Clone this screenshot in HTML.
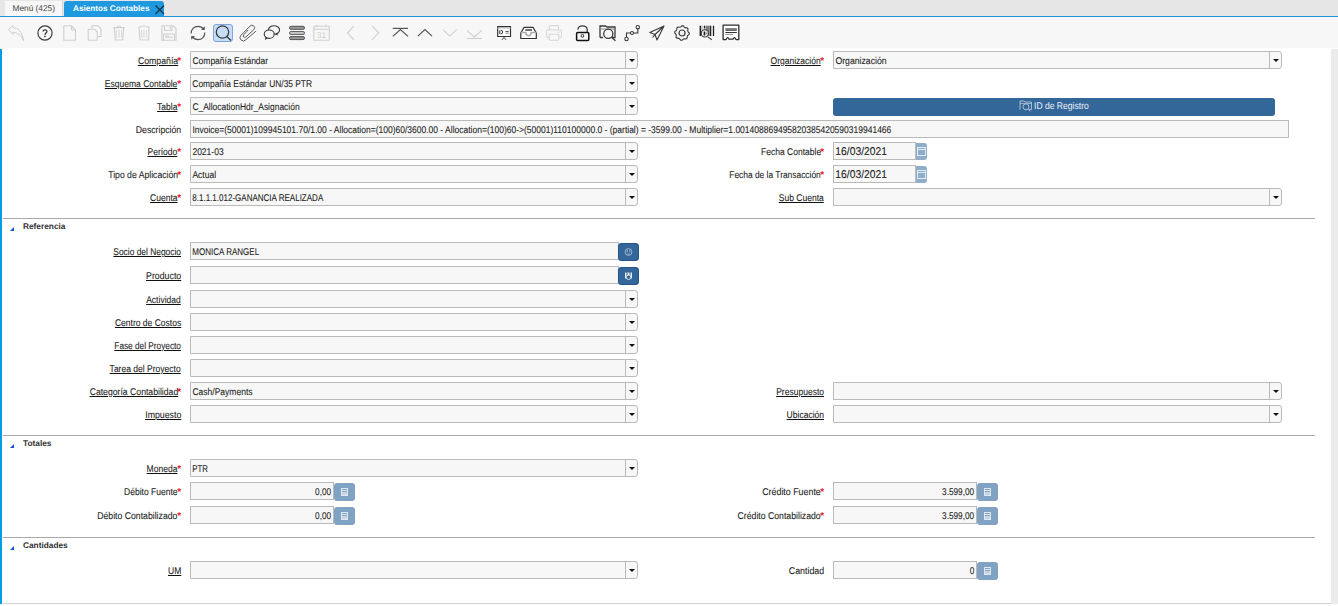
<!DOCTYPE html><html><head><meta charset="utf-8"><title>Asientos Contables</title><style>
*{margin:0;padding:0;box-sizing:border-box}
html,body{width:1338px;height:606px;overflow:hidden;background:#fff;font-family:"Liberation Sans", sans-serif;color:#333;position:relative;text-rendering:geometricPrecision}
.abs{position:absolute}
#tabbar{position:absolute;left:0;top:0;width:1338px;height:16px;background:#e6e6e6}
#tabline{position:absolute;left:0;top:16px;width:1338px;height:1px;background:#1b94da}
#tab1{position:absolute;left:5px;top:1px;width:58px;height:15px;background:#f7f7f7;border-right:1px solid #d4d4d4;font-size:8.3px;color:#444;line-height:15px;padding-left:7.5px;white-space:nowrap}
#tab2{position:absolute;left:64px;top:1px;width:100px;height:15px;background:#1e98de;border-radius:3px 3px 0 0;font-size:8.2px;font-weight:bold;color:#fff;line-height:15px;padding-left:9px;white-space:nowrap;overflow:hidden}
#toolbar{position:absolute;left:0;top:17px;width:1338px;height:31px;background:#f7f7f7}
.ic{position:absolute;overflow:visible}
.sbox{position:absolute;left:213px;top:24px;width:20px;height:18px;background:#c6ddf7;border:1px solid #7fa6da;border-radius:3px}
#lbar{position:absolute;left:0;top:49px;width:2px;height:555px;background:#049ce2}
#rstrip{position:absolute;left:1331px;top:49px;width:7px;height:555px;background:#ebebeb}
.sep{position:absolute;left:3px;width:1312px;height:1px;background:#a9a9a9}
.gtri{position:absolute;left:10px;width:0;height:0;border-left:4px solid transparent;border-bottom:4px solid #0d56cf}
.gt{position:absolute;left:23px;font-size:8.3px;font-weight:bold;color:#333;line-height:12px}
.lb{position:absolute;height:18px;line-height:18px;margin-top:2px;font-size:9.8px;white-space:nowrap;color:#222;-webkit-text-stroke:0.08px #222;text-align:right}
.lb .sx{display:inline-block;transform:scaleX(0.87);transform-origin:100% 50%}
.lb u{text-decoration:underline;text-decoration-color:#111;text-decoration-thickness:1px;text-underline-offset:0.5px}
.st{-webkit-text-stroke:0;font-style:normal;color:#f0101a;font-size:10px;font-weight:bold;position:relative;top:0px;left:-0.6px;margin-left:0;display:inline-block;width:3.2px}
.cb{position:absolute;height:18px;border:1px solid #bababa;border-radius:0 3px 3px 0;background:#f7f7f7}
.cbt{position:absolute;left:0;top:0;right:12px;height:16px;line-height:16px;overflow:hidden;white-space:nowrap}
.cbb{position:absolute;right:0;top:0;width:12px;height:16px;border-left:1px solid #bababa}
.tri{position:absolute;left:2.6px;top:7px;width:0;height:0;border-left:3px solid transparent;border-right:3px solid transparent;border-top:3.4px solid #111}
.tb{position:absolute;height:18px;border:1px solid #bababa;background:#f7f7f7;line-height:16px;overflow:hidden;white-space:nowrap}
.tx{display:inline-block;position:relative;top:0px;font-size:9.8px;transform:scaleX(0.87);transform-origin:0 50%;padding-left:1.6px;color:#222;-webkit-text-stroke:0.08px #222}
.nx{position:absolute;right:2px;top:2px;display:inline-block;font-size:9.8px;transform:scaleX(0.84);transform-origin:100% 50%;color:#222;-webkit-text-stroke:0.08px #222}
.dx{display:inline-block;position:relative;top:0px;font-size:11.3px;transform:scaleX(0.915);transform-origin:0 50%;padding-left:1.5px;color:#1e1e1e;-webkit-text-stroke:0.1px #1e1e1e}
.bb{position:absolute;width:21px;height:18px;background:#336699;border:1px solid #255585;border-radius:3px}
.cbtn{position:absolute;width:21px;height:18px;background:#80a3c3;border-radius:3px}
.dbtn{position:absolute;width:11px;height:17px;background:#8fadca;border-radius:0 3px 3px 0}
.btn{position:absolute;background:#336699;border-radius:3px;color:#eef3f8}
#botline{position:absolute;left:3px;top:603px;width:1328px;height:1px;background:#cfcfcf}
</style></head><body><div id="tabbar"></div><div id="tabline"></div>
<div id="tab1">Menú (425)</div>
<div id="tab2">Asientos Contables</div>
<svg class="ic" style="left:154px;top:4px" width="11" height="11" viewBox="0 0 11 11"><path d="M1.5 1.5 L10 10 M10 1.5 L1.5 10" stroke="#1a2a3a" stroke-width="1.1"/></svg>
<div id="toolbar"></div>
<svg class="ic" style="left:6px;top:24px" width="20" height="18" viewBox="0 0 20 18"><path d="M2.5 5.5 L7 1.5 L7 3.6 C12 3.8 16.5 8 17.5 16.5 C15 11 11.5 8.5 7 8.3 L7 10.5 Z" fill="none" stroke="#cfcfcf" stroke-width="1" stroke-linejoin="round"/></svg>
<svg class="ic" style="left:36px;top:24px" width="18" height="18" viewBox="0 0 18 18"><circle cx="9" cy="9" r="7.1" fill="none" stroke="#3a3a3a" stroke-width="1.15"/><path d="M7.1 7.6 C7.1 5.4 10.9 5.4 10.9 7.5 C10.9 9 9 9.2 9 10.8" fill="none" stroke="#3a3a3a" stroke-width="1.3"/><circle cx="9" cy="12.3" r="0.85" fill="#3a3a3a"/></svg>
<svg class="ic" style="left:62px;top:24px" width="16" height="18" viewBox="0 0 16 18"><path d="M1.8 1.8 H9.5 L13.5 5.8 V16.2 H1.8 Z M9.5 1.8 V5.8 H13.5" fill="none" stroke="#cfcfcf" stroke-width="1.1" stroke-linejoin="round"/></svg>
<svg class="ic" style="left:86px;top:24px" width="18" height="18" viewBox="0 0 18 18"><path d="M6 4.5 V1.8 H12 L15 4.8 V12.5 H12" fill="none" stroke="#cfcfcf" stroke-width="1.1"/><path d="M2.2 5.2 H8.5 L11.2 8 V16.2 H2.2 Z" fill="none" stroke="#cfcfcf" stroke-width="1.1" stroke-linejoin="round"/></svg>
<svg class="ic" style="left:111px;top:24px" width="16" height="18" viewBox="0 0 16 18"><path d="M2.2 3.6 H13.8 M6.2 3.4 C6.2 1.6 9.8 1.6 9.8 3.4 M3.4 4 L4.2 16 H11.8 L12.6 4" fill="none" stroke="#cfcfcf" stroke-width="1.1"/><path d="M5.3 6 V14 M8 6 V14 M10.7 6 V14" fill="none" stroke="#cfcfcf" stroke-width="0.75"/></svg>
<svg class="ic" style="left:136px;top:24px" width="16" height="18" viewBox="0 0 16 18"><path d="M3 3.5 C5 1.5 11 1.5 13 3.5 L12.5 16 H4 Z" fill="none" stroke="#cfcfcf" stroke-width="1.1"/><path d="M5.6 6 V14 M7.9 6 V14 M10.3 6 V14" fill="none" stroke="#cfcfcf" stroke-width="0.75"/></svg>
<svg class="ic" style="left:160px;top:24px" width="18" height="18" viewBox="0 0 18 18"><path d="M1.8 1.8 H13.5 L16 4.3 V16.2 H1.8 Z M4.5 1.8 V6.5 H12 V1.8 M10.3 2.5 V5.5 M3.5 16.2 V10 H14.5 V16.2 M5 12 H9 M5 13.2 H13" fill="none" stroke="#cfcfcf" stroke-width="1.1"/></svg>
<svg class="ic" style="left:189px;top:24px" width="18" height="18" viewBox="0 0 18 18"><path d="M2.2 9.5 C2 5.5 5 2.3 9 2.3 C11.5 2.3 13.5 3.5 15 5.3 M15.8 8.5 C16 12.5 13 15.7 9 15.7 C6.5 15.7 4.5 14.5 3 12.7" fill="none" stroke="#555" stroke-width="1.2"/><path d="M15.8 2.2 L15.8 6 L12 6 Z M2.2 15.8 L2.2 12 L6 12 Z" fill="#555"/></svg>
<div class="sbox"></div>
<svg class="ic" style="left:213px;top:24px" width="20" height="18" viewBox="0 0 20 18"><circle cx="9.5" cy="8" r="6.2" fill="none" stroke="#3a3a3a" stroke-width="1.3"/><path d="M13.8 12.5 L18 16.5" stroke="#3a3a3a" stroke-width="1.4"/></svg>
<svg class="ic" style="left:238px;top:24px" width="20" height="18" viewBox="0 0 20 18"><path d="M17.8 7.3 L7.77 15.79 A3.3 3.3 0 0 1 2.83 11.41 L12.06 2.07 A2.6 2.6 0 0 1 15.94 5.53 L7.88 12.95 A1.5 1.5 0 0 1 5.64 10.95 L9.9 6.3" fill="none" stroke="#5a5a5a" stroke-width="1" stroke-linecap="round" stroke-linejoin="round"/></svg>
<svg class="ic" style="left:263px;top:24px" width="18" height="18" viewBox="0 0 18 18"><ellipse cx="11" cy="6" rx="5.6" ry="4.2" fill="none" stroke="#3a3a3a" stroke-width="1.1"/><ellipse cx="6.2" cy="10.2" rx="5" ry="4.2" fill="#f6f6f6" stroke="#3a3a3a" stroke-width="1.1"/><path d="M2.5 13 L1.8 16 L5 14.2 Z" fill="#3a3a3a"/><path d="M15 9 L14.5 11.5 L12.5 10.5 Z" fill="#3a3a3a"/></svg>
<svg class="ic" style="left:288px;top:24px" width="18" height="18" viewBox="0 0 18 18"><rect x="1.5" y="2.3" width="15" height="3" rx="1.5" fill="#9a9a9a" stroke="#444" stroke-width="0.9"/><rect x="1.5" y="7.5" width="15" height="3" rx="1.5" fill="#c4c4c4" stroke="#555" stroke-width="0.9"/><rect x="1.5" y="12.6" width="15" height="3" rx="1.5" fill="#9a9a9a" stroke="#444" stroke-width="0.9"/></svg>
<svg class="ic" style="left:312px;top:24px" width="19" height="18" viewBox="0 0 19 18"><rect x="1.8" y="2.2" width="15.5" height="14" rx="0.8" fill="none" stroke="#cfcfcf" stroke-width="1.1"/><path d="M1.8 5.2 H17.3 M5 0.8 V3 M14 0.8 V3" stroke="#cfcfcf" stroke-width="1.1"/><text x="9.5" y="14.2" text-anchor="middle" font-family="Liberation Sans" font-size="8.5" fill="#cfcfcf" text-rendering="geometricPrecision">31</text></svg>
<svg class="ic" style="left:345px;top:24px" width="12" height="18" viewBox="0 0 12 18"><path d="M9 1.8 L2.5 8.8 L9 15.8" fill="none" stroke="#cfcfcf" stroke-width="1.1"/></svg>
<svg class="ic" style="left:369px;top:24px" width="12" height="18" viewBox="0 0 12 18"><path d="M3 1.8 L9.7 8.8 L3 15.8" fill="none" stroke="#cfcfcf" stroke-width="1.1"/></svg>
<svg class="ic" style="left:391px;top:24px" width="18" height="18" viewBox="0 0 18 18"><path d="M1.8 4.4 H17" stroke="#555" stroke-width="1.2"/><path d="M1.8 12.4 L9.4 5.6 L17 12.4" fill="none" stroke="#555" stroke-width="1.2"/></svg>
<svg class="ic" style="left:416px;top:24px" width="18" height="18" viewBox="0 0 18 18"><path d="M1.8 12.1 L9 5.5 L16 12.1" fill="none" stroke="#555" stroke-width="1.2"/></svg>
<svg class="ic" style="left:441px;top:24px" width="18" height="18" viewBox="0 0 18 18"><path d="M2 5.6 L8.8 12.1 L15.6 5.6" fill="none" stroke="#cfcfcf" stroke-width="1.1"/></svg>
<svg class="ic" style="left:465px;top:24px" width="18" height="18" viewBox="0 0 18 18"><path d="M2 6.4 L9.3 13 L16.8 6.4" fill="none" stroke="#cfcfcf" stroke-width="1.1"/><path d="M2 14.5 H16.8" stroke="#cfcfcf" stroke-width="1.1"/></svg>
<svg class="ic" style="left:495px;top:24px" width="18" height="18" viewBox="0 0 18 18"><path d="M2.7 3 V12.5 H15.5 V3" fill="#fff" stroke="#333" stroke-width="1.2"/><path d="M2.3 4 H16 " stroke="#bbb" stroke-width="1"/><path d="M2.1 2.6 H16.1" stroke="#333" stroke-width="1.2"/><path d="M4.8 6.2 V10 M5.8 6.2 C8.2 6.2 8.2 10 5.8 10" fill="none" stroke="#444" stroke-width="1.1"/><path d="M10.5 7.7 H13.6" stroke="#333" stroke-width="1.1"/><path d="M10.5 9.6 H14" stroke="#aaa" stroke-width="1"/><path d="M7 15.8 L9 13.4 L11 15.8" fill="none" stroke="#333" stroke-width="1"/></svg>
<svg class="ic" style="left:519px;top:24px" width="19" height="18" viewBox="0 0 19 18"><path d="M5.1 3.4 H14 L17.3 9 V14.5 H1.8 V9 Z" fill="#fff" stroke="#333" stroke-width="1.2" stroke-linejoin="round"/><path d="M1.8 8.6 H6.8 C7.3 12.8 11.8 12.8 12.3 8.6 H17.3" fill="none" stroke="#aaa" stroke-width="1.5"/><path d="M6.3 6 H13" stroke="#333" stroke-width="1.4"/></svg>
<svg class="ic" style="left:545px;top:24px" width="18" height="18" viewBox="0 0 18 18"><path d="M4.5 6 V2.2 C4.5 1.8 4.8 1.6 5.2 1.6 H12.8 C13.2 1.6 13.5 1.8 13.5 2.2 V6 M3.8 13.5 H2.3 C1.9 13.5 1.6 13.2 1.6 12.8 V6.8 C1.6 6.4 1.9 6 2.3 6 H15.7 C16.1 6 16.4 6.4 16.4 6.8 V12.8 C16.4 13.2 16.1 13.5 15.7 13.5 H14.2 M4.3 10.3 H13.7 V15.6 C13.7 16 13.4 16.3 13 16.3 H5 C4.6 16.3 4.3 16 4.3 15.6 Z" fill="none" stroke="#d8d8d8" stroke-width="1.1"/><path d="M12.3 8.2 H13.1 M14.2 8.2 H15" stroke="#d0d0d0" stroke-width="1"/></svg>
<svg class="ic" style="left:574px;top:24px" width="17" height="18" viewBox="0 0 17 18"><path d="M4 5.6 C3.5 0.5 13.5 0.5 13.2 5.6 V8" fill="none" stroke="#3a3a3a" stroke-width="1.3"/><rect x="2.6" y="8.4" width="12.2" height="8.2" rx="1" fill="none" stroke="#111" stroke-width="1.5"/><ellipse cx="8.4" cy="11.9" rx="1.3" ry="1.5" fill="none" stroke="#3a3a3a" stroke-width="1"/></svg>
<svg class="ic" style="left:598px;top:24px" width="19" height="18" viewBox="0 0 19 18"><path d="M2 13.5 V2 H7.5 L9 3 H17 V13.5 H13.5 M2 13.5 H5" fill="none" stroke="#3a3a3a" stroke-width="1.3"/><path d="M2 5 H17" stroke="#888" stroke-width="1"/><circle cx="10.3" cy="9.8" r="4.6" fill="none" stroke="#3a3a3a" stroke-width="1.3"/><path d="M13.5 13.3 L17.5 16.8" stroke="#3a3a3a" stroke-width="1.3"/></svg>
<svg class="ic" style="left:623px;top:24px" width="18" height="18" viewBox="0 0 18 18"><circle cx="3.5" cy="15" r="1.7" fill="#fff" stroke="#3a3a3a" stroke-width="1.1"/><circle cx="9" cy="9" r="1.5" fill="#fff" stroke="#3a3a3a" stroke-width="1.1"/><circle cx="14.8" cy="3.2" r="1.7" fill="#fff" stroke="#3a3a3a" stroke-width="1.1"/><path d="M3.5 13.3 V9 H7.5 M10.5 9 H14.8 V5" fill="none" stroke="#3a3a3a" stroke-width="1.1"/></svg>
<svg class="ic" style="left:648px;top:24px" width="18" height="18" viewBox="0 0 18 18"><path d="M16 2 L1.8 8.5 L7 10.5 L9 16 Z M16 2 L7 10.5 M4.5 13.5 L7 10.5" fill="none" stroke="#3a3a3a" stroke-width="1.1" stroke-linejoin="round"/></svg>
<svg class="ic" style="left:673px;top:24px" width="18" height="18" viewBox="0 0 18 18"><polygon points="16.30,9.00 16.16,10.42 14.73,11.37 14.16,12.44 14.16,14.16 13.06,15.07 11.37,14.73 10.21,15.08 9.00,16.30 7.58,16.16 6.63,14.73 5.56,14.16 3.84,14.16 2.93,13.06 3.27,11.37 2.92,10.21 1.70,9.00 1.84,7.58 3.27,6.63 3.84,5.56 3.84,3.84 4.94,2.93 6.63,3.27 7.79,2.92 9.00,1.70 10.42,1.84 11.37,3.27 12.44,3.84 14.16,3.84 15.07,4.94 14.73,6.63 15.08,7.79" fill="none" stroke="#3a3a3a" stroke-width="1.1" stroke-linejoin="round"/><circle cx="9" cy="9" r="3" fill="none" stroke="#3a3a3a" stroke-width="1.2"/></svg>
<svg class="ic" style="left:697px;top:24px" width="18" height="18" viewBox="0 0 18 18"><path d="M3.3 1.7 V12" stroke="#222" stroke-width="1.4"/><path d="M5 1.7 V12" stroke="#888" stroke-width="0.8"/><path d="M7.5 1.7 V4.5" stroke="#222" stroke-width="1.3"/><rect x="8.6" y="1.7" width="3.4" height="10.3" fill="#7e7e7e"/><path d="M13.4 1.7 V12" stroke="#222" stroke-width="1.7"/><path d="M16.5 1.7 V12" stroke="#222" stroke-width="1.3"/><circle cx="7.8" cy="9.4" r="3.6" fill="#f4f4f4" stroke="#333" stroke-width="1.1"/><path d="M7.3 7.4 V11.4" stroke="#111" stroke-width="1.3"/><path d="M8.4 7.6 L10.5 9.4 L8.4 11.2 Z" fill="#888"/><path d="M10.6 12.6 L14.8 15.8" stroke="#444" stroke-width="1.1"/></svg>
<svg class="ic" style="left:722px;top:24px" width="18" height="18" viewBox="0 0 18 18"><path d="M1.1 15.6 V1.2 H16.8 V15.6 H14 C13 13 12 13 11 15.2 H7 C6 13 5 13 4 15.6 Z" fill="#fff" stroke="#2e2e2e" stroke-width="1.3" stroke-linejoin="round"/><rect x="3.4" y="4.2" width="11.4" height="2.8" fill="#666"/><path d="M3.4 5.6 H14.8" stroke="#999" stroke-width="0.4"/><path d="M3.4 8.5 H14.8" stroke="#333" stroke-width="1"/><path d="M3.4 10.4 H10.9" stroke="#777" stroke-width="0.8"/></svg>
<div id="lbar"></div><div id="rstrip"></div>
<div class="lb" style="right:1157px;top:51px"><span class="sx" style="transform:scaleX(0.8917)"><u>Compañía</u></span><i class="st">*</i></div>
<div class="cb" style="left:190px;top:51px;width:448px"><div class="cbt"><span class="tx">Compañía Estándar</span></div><div class="cbb"><i class="tri"></i></div></div>
<div class="lb" style="right:514px;top:51px"><span class="sx"><u>Organización</u></span><i class="st">*</i></div>
<div class="cb" style="left:833px;top:51px;width:449px"><div class="cbt"><span class="tx" style="transform:scaleX(0.8874)">Organización</span></div><div class="cbb"><i class="tri"></i></div></div>
<div class="lb" style="right:1157px;top:74px"><span class="sx"><u>Esquema Contable</u></span><i class="st">*</i></div>
<div class="cb" style="left:190px;top:74px;width:448px"><div class="cbt"><span class="tx" style="transform:scaleX(0.8552)">Compañía Estándar UN/35 PTR</span></div><div class="cbb"><i class="tri"></i></div></div>
<div class="lb" style="right:1157px;top:97px"><span class="sx"><u>Tabla</u></span><i class="st">*</i></div>
<div class="cb" style="left:190px;top:97px;width:448px"><div class="cbt"><span class="tx" style="transform:scaleX(0.8639)">C_AllocationHdr_Asignación</span></div><div class="cbb"><i class="tri"></i></div></div>
<div class="btn" style="left:833px;top:98px;width:442px;height:18px"></div>
<svg class="ic" style="left:1019px;top:100px" width="14" height="12" viewBox="0 0 14 12"><path d="M1 9.5 V1 H5 L6 2 H12.5 V9.5 H10" fill="none" stroke="#a9bfd6" stroke-width="1"/><path d="M1 3.5 H12.5" stroke="#a9bfd6" stroke-width="0.8"/><circle cx="7" cy="6.8" r="3" fill="none" stroke="#a9bfd6" stroke-width="1"/><path d="M9.2 9 L11.5 11.3" stroke="#a9bfd6" stroke-width="1"/></svg>
<div class="abs" style="left:1034px;top:98px;height:18px;line-height:18px;font-size:9.8px;color:#eef3f8;white-space:nowrap"><span style="display:inline-block;transform:scaleX(0.875);transform-origin:0 50%">ID de Registro</span></div>
<div class="lb" style="right:1157px;top:120px"><span class="sx" style="transform:scaleX(0.8874)">Descripción</span></div>
<div class="tb" style="left:190px;top:120px;width:1099px"><span class="tx" style="transform:scaleX(0.8672)">Invoice=(50001)109945101.70/1.00 - Allocation=(100)60/3600.00 - Allocation=(100)60-&gt;(50001)110100000.0 - (partial) = -3599.00 - Multiplier=1.001408869495820385420590319941466</span></div>
<div class="lb" style="right:1157px;top:142px"><span class="sx"><u>Período</u></span><i class="st">*</i></div>
<div class="cb" style="left:190px;top:142px;width:448px"><div class="cbt"><span class="tx">2021-03</span></div><div class="cbb"><i class="tri"></i></div></div>
<div class="lb" style="right:514px;top:142px"><span class="sx">Fecha Contable</span><i class="st">*</i></div>
<div class="tb dt" style="left:833px;top:142px;width:83px"><span class="dx">16/03/2021</span></div>
<div class="dbtn" style="left:916px;top:143px"><svg width="11" height="17" viewBox="0 0 11 17"><rect x="1.5" y="4.5" width="8" height="8" fill="none" stroke="#e4ecf3" stroke-width="1"/><rect x="1" y="6" width="9" height="1" fill="#e4ecf3"/></svg></div>
<div class="lb" style="right:1157px;top:165px"><span class="sx" style="transform:scaleX(0.8839)">Tipo de Aplicación</span><i class="st">*</i></div>
<div class="cb" style="left:190px;top:165px;width:448px"><div class="cbt"><span class="tx">Actual</span></div><div class="cbb"><i class="tri"></i></div></div>
<div class="lb" style="right:514px;top:165px"><span class="sx" style="transform:scaleX(0.8569)">Fecha de la Transacción</span><i class="st">*</i></div>
<div class="tb dt" style="left:833px;top:165px;width:83px"><span class="dx">16/03/2021</span></div>
<div class="dbtn" style="left:916px;top:166px"><svg width="11" height="17" viewBox="0 0 11 17"><rect x="1.5" y="4.5" width="8" height="8" fill="none" stroke="#e4ecf3" stroke-width="1"/><rect x="1" y="6" width="9" height="1" fill="#e4ecf3"/></svg></div>
<div class="lb" style="right:1157px;top:188px"><span class="sx"><u>Cuenta</u></span><i class="st">*</i></div>
<div class="cb" style="left:190px;top:188px;width:448px"><div class="cbt"><span class="tx" style="transform:scaleX(0.8178)">8.1.1.1.012-GANANCIA REALIZADA</span></div><div class="cbb"><i class="tri"></i></div></div>
<div class="lb" style="right:514px;top:188px"><span class="sx"><u>Sub Cuenta</u></span></div>
<div class="cb" style="left:833px;top:188px;width:449px"><div class="cbt"><span class="tx"></span></div><div class="cbb"><i class="tri"></i></div></div>
<div class="sep" style="top:218px"></div>
<div class="gtri" style="top:227px"></div>
<div class="gt" style="top:220px">Referencia</div>
<div class="lb" style="right:1157px;top:242px"><span class="sx" style="transform:scaleX(0.8561)"><u>Socio del Negocio</u></span></div>
<div class="tb" style="left:190px;top:242px;width:429px"><span class="tx" style="transform:scaleX(0.8178)">MONICA RANGEL</span></div>
<div class="bb" style="left:618px;top:243px"><svg width="19" height="16" viewBox="0 0 19 16" style="position:absolute;left:0;top:0"><circle cx="9.5" cy="8" r="3.4" fill="none" stroke="#a8c0da" stroke-width="0.9"/><path d="M8.3 6 V8.5 M10.7 6 V8.5 M8.3 10 H10.7" stroke="#a8c0da" stroke-width="0.8"/></svg></div>
<div class="lb" style="right:1157px;top:266px"><span class="sx" style="transform:scaleX(0.8961)"><u>Producto</u></span></div>
<div class="tb" style="left:190px;top:266px;width:429px"><span class="tx"></span></div>
<div class="bb" style="left:618px;top:267px"><svg width="19" height="16" viewBox="0 0 19 16" style="position:absolute;left:0;top:0"><path d="M6.5 4.5 V10.5 M8 4.5 V10.5 M9.5 4.5 V7 M11 4.5 V10.5 M12.5 4.5 V10.5" stroke="#e6eef6" stroke-width="1"/><circle cx="9.6" cy="9.3" r="2.2" fill="#336699" stroke="#e6eef6" stroke-width="0.9"/></svg></div>
<div class="lb" style="right:1157px;top:290px"><span class="sx"><u>Actividad</u></span></div>
<div class="cb" style="left:190px;top:290px;width:448px"><div class="cbt"><span class="tx"></span></div><div class="cbb"><i class="tri"></i></div></div>
<div class="lb" style="right:1157px;top:313px"><span class="sx"><u>Centro de Costos</u></span></div>
<div class="cb" style="left:190px;top:313px;width:448px"><div class="cbt"><span class="tx"></span></div><div class="cbb"><i class="tri"></i></div></div>
<div class="lb" style="right:1157px;top:336px"><span class="sx" style="transform:scaleX(0.8439)"><u>Fase del Proyecto</u></span></div>
<div class="cb" style="left:190px;top:336px;width:448px"><div class="cbt"><span class="tx"></span></div><div class="cbb"><i class="tri"></i></div></div>
<div class="lb" style="right:1157px;top:359px"><span class="sx"><u>Tarea del Proyecto</u></span></div>
<div class="cb" style="left:190px;top:359px;width:448px"><div class="cbt"><span class="tx"></span></div><div class="cbb"><i class="tri"></i></div></div>
<div class="lb" style="right:1157px;top:382px"><span class="sx" style="transform:scaleX(0.8839)"><u>Categoría Contabilidad</u></span><i class="st">*</i></div>
<div class="cb" style="left:190px;top:382px;width:448px"><div class="cbt"><span class="tx">Cash/Payments</span></div><div class="cbb"><i class="tri"></i></div></div>
<div class="lb" style="right:514px;top:382px"><span class="sx"><u>Presupuesto</u></span></div>
<div class="cb" style="left:833px;top:382px;width:449px"><div class="cbt"><span class="tx"></span></div><div class="cbb"><i class="tri"></i></div></div>
<div class="lb" style="right:1157px;top:405px"><span class="sx" style="transform:scaleX(0.8961)"><u>Impuesto</u></span></div>
<div class="cb" style="left:190px;top:405px;width:448px"><div class="cbt"><span class="tx"></span></div><div class="cbb"><i class="tri"></i></div></div>
<div class="lb" style="right:514px;top:405px"><span class="sx"><u>Ubicación</u></span></div>
<div class="cb" style="left:833px;top:405px;width:449px"><div class="cbt"><span class="tx"></span></div><div class="cbb"><i class="tri"></i></div></div>
<div class="sep" style="top:435px"></div>
<div class="gtri" style="top:444px"></div>
<div class="gt" style="top:437px">Totales</div>
<div class="lb" style="right:1157px;top:459px"><span class="sx"><u>Moneda</u></span><i class="st">*</i></div>
<div class="cb" style="left:190px;top:459px;width:448px"><div class="cbt"><span class="tx" style="transform:scaleX(0.8004)">PTR</span></div><div class="cbb"><i class="tri"></i></div></div>
<div class="lb" style="right:1157px;top:482px"><span class="sx">Débito Fuente</span><i class="st">*</i></div>
<div class="tb" style="left:190px;top:482px;width:144px"><span class="nx">0,00</span></div>
<div class="cbtn" style="left:334px;top:483px"><svg width="21" height="18" viewBox="0 0 21 18"><rect x="7.5" y="5.5" width="6" height="7" fill="none" stroke="#dfe8f0" stroke-width="1"/><rect x="7" y="7" width="7" height="1" fill="#dfe8f0"/><rect x="8" y="9" width="5" height="3" fill="#c8d6e4"/></svg></div>
<div class="lb" style="right:514px;top:482px"><span class="sx" style="transform:scaleX(0.9048)">Crédito Fuente</span><i class="st">*</i></div>
<div class="tb" style="left:833px;top:482px;width:144px"><span class="nx">3.599,00</span></div>
<div class="cbtn" style="left:977px;top:483px"><svg width="21" height="18" viewBox="0 0 21 18"><rect x="7.5" y="5.5" width="6" height="7" fill="none" stroke="#dfe8f0" stroke-width="1"/><rect x="7" y="7" width="7" height="1" fill="#dfe8f0"/><rect x="8" y="9" width="5" height="3" fill="#c8d6e4"/></svg></div>
<div class="lb" style="right:1157px;top:506px"><span class="sx" style="transform:scaleX(0.8874)">Débito Contabilizado</span><i class="st">*</i></div>
<div class="tb" style="left:190px;top:506px;width:144px"><span class="nx">0,00</span></div>
<div class="cbtn" style="left:334px;top:507px"><svg width="21" height="18" viewBox="0 0 21 18"><rect x="7.5" y="5.5" width="6" height="7" fill="none" stroke="#dfe8f0" stroke-width="1"/><rect x="7" y="7" width="7" height="1" fill="#dfe8f0"/><rect x="8" y="9" width="5" height="3" fill="#c8d6e4"/></svg></div>
<div class="lb" style="right:514px;top:506px"><span class="sx" style="transform:scaleX(0.8874)">Crédito Contabilizado</span><i class="st">*</i></div>
<div class="tb" style="left:833px;top:506px;width:144px"><span class="nx">3.599,00</span></div>
<div class="cbtn" style="left:977px;top:507px"><svg width="21" height="18" viewBox="0 0 21 18"><rect x="7.5" y="5.5" width="6" height="7" fill="none" stroke="#dfe8f0" stroke-width="1"/><rect x="7" y="7" width="7" height="1" fill="#dfe8f0"/><rect x="8" y="9" width="5" height="3" fill="#c8d6e4"/></svg></div>
<div class="sep" style="top:537px"></div>
<div class="gtri" style="top:546px"></div>
<div class="gt" style="top:539px">Cantidades</div>
<div class="lb" style="right:1157px;top:561px"><span class="sx"><u>UM</u></span></div>
<div class="cb" style="left:190px;top:561px;width:448px"><div class="cbt"><span class="tx"></span></div><div class="cbb"><i class="tri"></i></div></div>
<div class="lb" style="right:514px;top:561px"><span class="sx" style="transform:scaleX(0.9048)">Cantidad</span></div>
<div class="tb" style="left:833px;top:561px;width:144px"><span class="nx">0</span></div>
<div class="cbtn" style="left:977px;top:562px"><svg width="21" height="18" viewBox="0 0 21 18"><rect x="7.5" y="5.5" width="6" height="7" fill="none" stroke="#dfe8f0" stroke-width="1"/><rect x="7" y="7" width="7" height="1" fill="#dfe8f0"/><rect x="8" y="9" width="5" height="3" fill="#c8d6e4"/></svg></div>
<div id="botline"></div></body></html>
